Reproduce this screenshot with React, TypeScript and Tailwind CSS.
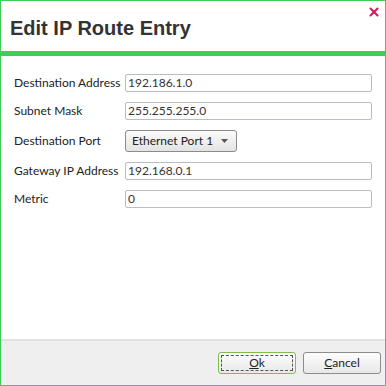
import { X } from 'lucide-react'

const FIELDS = [
  { label: 'Destination Address', value: '192.186.1.0' },
  { label: 'Subnet Mask', value: '255.255.255.0' },
  { label: 'Destination Port', value: 'Ethernet Port 1', select: true },
  { label: 'Gateway IP Address', value: '192.168.0.1' },
  { label: 'Metric', value: '0' },
]

export default function App() {
  return (
    <div className="w-[386px] h-[386px] border border-[#3fcd5a] bg-white flex flex-col font-['Lato','Liberation_Sans',sans-serif] text-[#222]">
      {/* Header */}
      <div className="h-[50px] shrink-0 relative flex items-center pl-[9px] pt-[3px]">
        <h1 className="font-['Liberation_Sans',Arial,sans-serif] font-bold text-[20px] text-[#333] leading-none">
          Edit IP Route Entry
        </h1>
        <button className="absolute right-[4px] top-[4px] text-[#d31e5b]">
          <X className="w-[14px] h-[14px]" strokeWidth={3.6} />
        </button>
      </div>
      <div className="h-[5px] shrink-0 bg-[#3fcd5a]" />

      {/* Form */}
      <div className="flex-1 flex flex-col gap-[10px] pt-[18px] pl-[13px] pr-[13px]">
        {FIELDS.map((f) => (
          <div key={f.label} className="flex items-center text-[12px] leading-[16px]">
            <label className="w-[111px] shrink-0 text-[#222]">{f.label}</label>
            {f.select ? (
              <div className="h-[22px] w-[112px] flex items-center justify-between pl-[6px] pr-[5px] border border-[#8c8c8c] rounded-[3px] bg-gradient-to-b from-[#fbfbfb] to-[#e3e3e3]">
                <span>{f.value}</span>
                <svg width="7" height="4" viewBox="0 0 7 4" className="mr-[3px]">
                  <path d="M0 0h7L3.5 4z" fill="#555" />
                </svg>
              </div>
            ) : (
              <div className="h-[18px] flex-1 flex items-center px-[2px] border border-[#b9bcc2] rounded-[2px] text-[#333]">
                {f.value}
              </div>
            )}
          </div>
        ))}
      </div>

      {/* Footer */}
      <div className="h-[46px] shrink-0 bg-[#efefef] border-t-2 border-[#e2e2e2] flex items-start justify-end gap-[7px] pt-[11px] pr-[4px] text-[12px]">
        <button className="w-[78px] h-[22px] rounded-[3px] border border-[#7cbf4e] bg-gradient-to-b from-[#fdfdfd] to-[#e8e8e8] p-[2px]">
          <span className="w-full h-full flex items-center justify-center border border-dashed border-[#555]">
            <span><span className="underline">O</span>k</span>
          </span>
        </button>
        <button className="w-[78px] h-[22px] rounded-[3px] border border-[#8c8c8c] bg-gradient-to-b from-[#fdfdfd] to-[#e8e8e8] flex items-center justify-center">
          <span><span className="underline">C</span>ancel</span>
        </button>
      </div>
    </div>
  )
}
